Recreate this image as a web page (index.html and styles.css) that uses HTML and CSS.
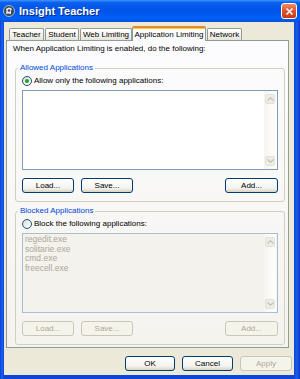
FILE: index.html
```html
<!DOCTYPE html>
<html lang="en">
<head>
  <meta charset="UTF-8" />
  <title>Insight Teacher</title>
  <link rel="stylesheet" href="styles.css">
</head>
<body>
<div class="window">
  <div class="titlebar">
    <svg class="app-icon" width="12" height="12" viewBox="0 0 12 12">
      <circle cx="6" cy="6" r="5.5" fill="#3a4a5a" stroke="#c8d4e0" stroke-width="0.8"/>
      <path d="M3 4 Q6 1 9 4 Q7 6 8 9 Q5 8 3 9 Q4 6 3 4Z" fill="#e8eef4"/>
      <circle cx="6" cy="5.5" r="1.3" fill="#3a4a5a"/>
    </svg>
    <span class="title">Insight Teacher</span>
    <div class="close-btn">
      <svg width="9" height="9" viewBox="0 0 9 9"><path d="M1.5 1.5 L7.5 7.5 M7.5 1.5 L1.5 7.5" stroke="#fff" stroke-width="1.6"/></svg>
    </div>
  </div>

  <div class="client">
    <div class="tabs">
      <div class="tab tab-teacher">Teacher</div>
      <div class="tab tab-student">Student</div>
      <div class="tab tab-web">Web Limiting</div>
      <div class="tab tab-app active">Application Limiting</div>
      <div class="tab tab-network">Network</div>
    </div>

    <div class="panel">
      <p class="intro">When Application Limiting is enabled, do the following:</p>

      <!-- 허용 목록 -->
      <fieldset class="group">
        <legend>Allowed Applications</legend>
        <label class="radio"><span class="radio-mark checked"></span>Allow only the following applications:</label>
        <div class="listbox">
          <div class="list-items"></div>
          <div class="scrollbar">
            <span class="arrow"><svg width="7" height="4" viewBox="0 0 7 4"><path d="M0.5 3.5 L3.5 0.8 L6.5 3.5" fill="none" stroke="#c4c2b6" stroke-width="1.2"/></svg></span>
            <span class="arrow"><svg width="7" height="4" viewBox="0 0 7 4"><path d="M0.5 0.5 L3.5 3.2 L6.5 0.5" fill="none" stroke="#c4c2b6" stroke-width="1.2"/></svg></span>
          </div>
        </div>
        <div class="group-buttons">
          <button class="btn">Load...</button>
          <button class="btn">Save...</button>
          <button class="btn btn-add">Add...</button>
        </div>
      </fieldset>

      <!-- 차단 목록 -->
      <fieldset class="group">
        <legend>Blocked Applications</legend>
        <label class="radio"><span class="radio-mark"></span>Block the following applications:</label>
        <div class="listbox disabled">
          <div class="list-items">
            <div class="list-item">regedit.exe</div>
            <div class="list-item">solitarie.exe</div>
            <div class="list-item">cmd.exe</div>
            <div class="list-item">freecell.exe</div>
          </div>
          <div class="scrollbar">
            <span class="arrow"><svg width="7" height="4" viewBox="0 0 7 4"><path d="M0.5 3.5 L3.5 0.8 L6.5 3.5" fill="none" stroke="#c4c2b6" stroke-width="1.2"/></svg></span>
            <span class="arrow"><svg width="7" height="4" viewBox="0 0 7 4"><path d="M0.5 0.5 L3.5 3.2 L6.5 0.5" fill="none" stroke="#c4c2b6" stroke-width="1.2"/></svg></span>
          </div>
        </div>
        <div class="group-buttons">
          <button class="btn" disabled>Load...</button>
          <button class="btn" disabled>Save...</button>
          <button class="btn btn-add" disabled>Add...</button>
        </div>
      </fieldset>
    </div>

    <div class="footer">
      <button class="btn btn-ok">OK</button>
      <button class="btn btn-cancel">Cancel</button>
      <button class="btn btn-apply" disabled>Apply</button>
    </div>
  </div>
</div>
</body>
</html>
```

FILE: styles.css
```css
* { box-sizing: border-box; margin: 0; padding: 0; }
body {
  font-family: "Liberation Sans", "DejaVu Sans", sans-serif;
  font-size: 8px;
  color: #000;
  background: #fff;
}
.window {
  width: 300px;
  height: 379px;
  display: flex;
  flex-direction: column;
  background: linear-gradient(to right, #0a3fd8, #1c62ec 2px, #0a46dc 4px, #0a46dc 294px, #1a5fe8 297px, #0833c8);
}
.titlebar {
  height: 22px;
  display: flex;
  align-items: center;
  padding: 0 3px 0 3px;
  background: linear-gradient(to bottom, #3d95ff 0%, #0a5fec 12%, #0054e8 45%, #0060f6 85%, #0a4fdc 100%);
  color: #fff;
}
.app-icon {
  margin-right: 4px;
  flex-shrink: 0;
}
.title {
  flex: 1;
  font-size: 11px;
  font-weight: bold;
  text-shadow: 1px 1px 0 #0a2a8a;
}
.close-btn {
  width: 16px;
  height: 16px;
  border: 1px solid #fff;
  border-radius: 3px;
  background: linear-gradient(to bottom, #f08a6a, #e0522a 50%, #c83a14);
  display: flex;
  align-items: center;
  justify-content: center;
}
.client {
  flex: 1;
  margin: 0 6px 4px 4px;
  background: #ece9d8;
  display: flex;
  flex-direction: column;
}

/* 탭 */
.tabs {
  height: 18px;
  display: flex;
  align-items: flex-end;
  padding-left: 5px;
}
.tab {
  height: 12px;
  margin-right: 1px;
  border: 1px solid #919b9c;
  border-bottom: none;
  border-radius: 2px 2px 0 0;
  background: linear-gradient(to bottom, #fff, #f3f2ec 60%, #e6e4da);
  display: flex;
  align-items: center;
  justify-content: center;
  white-space: nowrap;
}
.tab-teacher { width: 35px; }
.tab-student { width: 34px; }
.tab-web { width: 52px; margin-right: 0; }
.tab-app { width: 74px; }
.tab-network { width: 35px; }
.tab.active {
  height: 15px;
  margin-bottom: -1px;
  border-top: 2px solid #e68b2c;
  box-shadow: inset 0 1px 0 #ffc73c;
  background: #fcfcfe;
  position: relative;
  z-index: 1;
}

/* 탭 패널 */
.panel {
  width: 283px;
  height: 308px;
  margin-left: 2px;
  border: 1px solid #919b9c;
  background: linear-gradient(to bottom, #fcfcfe, #f4f3ee);
  padding: 0 3px 0 6px;
}
.intro {
  line-height: 15px;
  white-space: nowrap;
}
.group {
  margin: 7px 0 0 2px;
  border: 1px solid #d0d0bf;
  border-radius: 3px;
  padding: 0 6px 8px 6px;
}
.group + .group {
  margin-top: 4px;
}
.group legend {
  line-height: 10px;
  margin-left: -4px;
  padding: 0 2px;
  color: #0046d5;
}
.radio {
  height: 11px;
  margin-top: 2px;
  display: flex;
  align-items: center;
  gap: 2px;
  white-space: nowrap;
}
.radio-mark {
  width: 10px;
  height: 10px;
  border: 1px solid #1c5180;
  border-radius: 50%;
  background: linear-gradient(135deg, #dcdcd6, #fff);
  display: flex;
  align-items: center;
  justify-content: center;
}
.radio-mark.checked::after {
  content: "";
  width: 4px;
  height: 4px;
  border-radius: 50%;
  background: #21a121;
}
.listbox {
  height: 80px;
  margin-top: 4px;
  border: 1px solid #7f9db9;
  background: #fff;
  display: flex;
}
.listbox.disabled {
  border-color: #a9bdd3;
  background: #f3f2ec;
}
.list-items {
  flex: 1;
  padding: 1px 0 0 2px;
  color: #aca899;
  font-size: 8.5px;
}
.list-item {
  line-height: 9.5px;
}
.scrollbar {
  width: 12px;
  margin-right: 1px;
  padding: 3px 1px;
  background: linear-gradient(to right, #f6f5f0, #fefefd);
  display: flex;
  flex-direction: column;
  justify-content: space-between;
}
.arrow {
  height: 10px;
  border: 1px solid #e4e2d8;
  border-radius: 2px;
  background: #eeede5;
  display: flex;
  align-items: center;
  justify-content: center;
}
.group-buttons {
  margin-top: 8px;
  display: flex;
  gap: 7px;
}
.btn {
  width: 52px;
  height: 15px;
  font-family: inherit;
  font-size: 8px;
  color: #000;
  border: 1px solid #003c74;
  border-radius: 3px;
  background: linear-gradient(to bottom, #fff, #f4f3ee 70%, #d8d4c6);
  cursor: pointer;
}
.btn:disabled {
  color: #aca899;
  border-color: #c9c7ba;
  background: #f5f4ea;
  cursor: default;
}
.btn-add {
  width: 53px;
  margin-left: auto;
}
.footer {
  margin-top: 8px;
  padding-right: 2px;
  display: flex;
  justify-content: flex-end;
  gap: 7px;
}
.btn-ok { width: 50px; }
.btn-cancel { width: 51px; }
.btn-apply { width: 52px; }
```
